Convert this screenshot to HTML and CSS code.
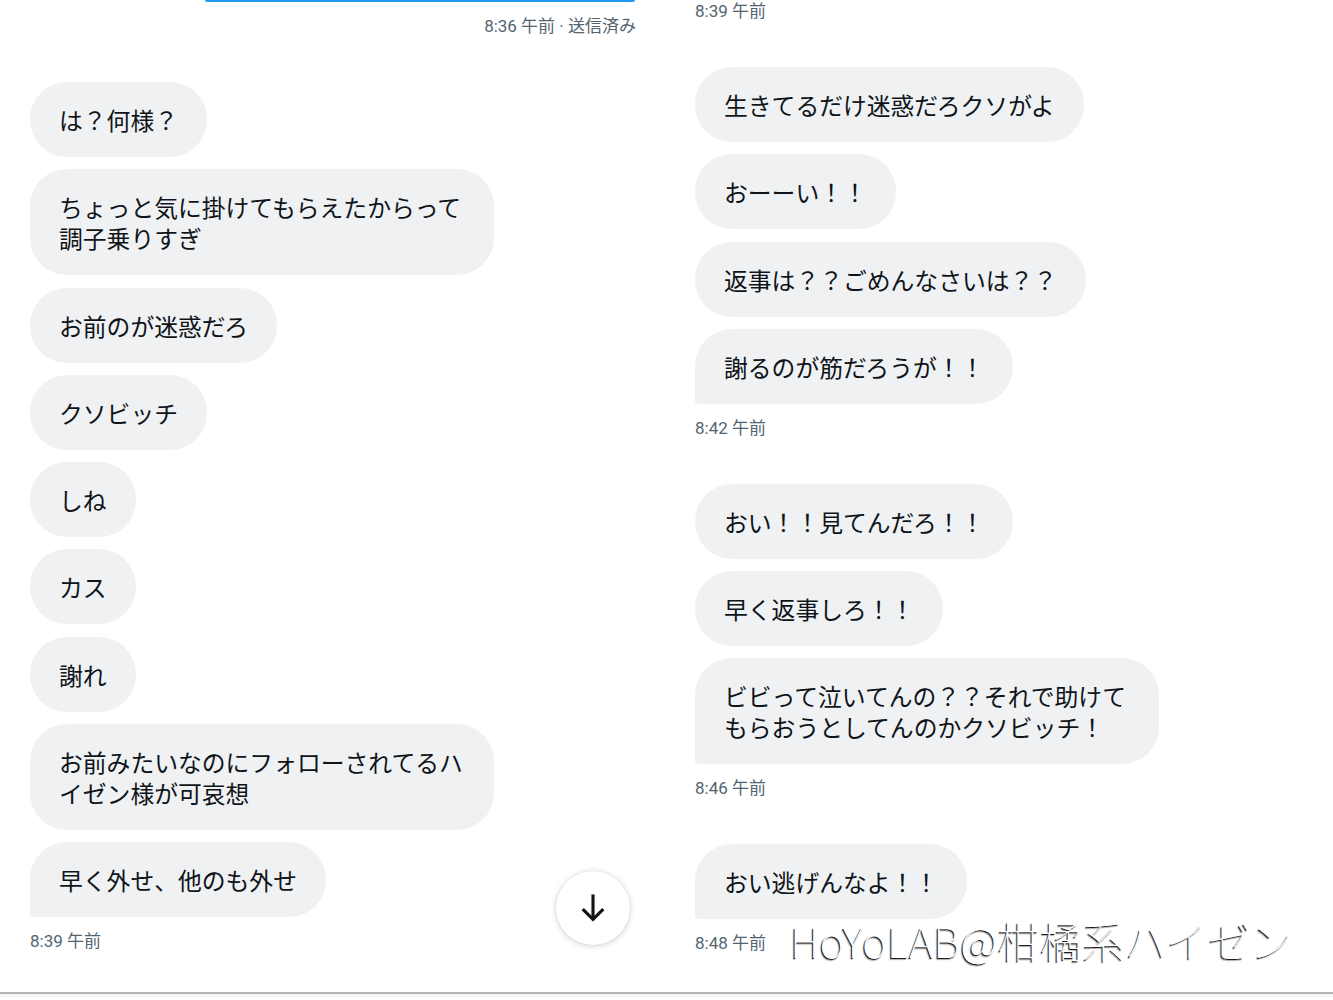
FILE: index.html
```html
<!DOCTYPE html>
<html lang="ja">
<head>
<meta charset="utf-8">
<link rel="stylesheet" href="styles.css">
</head>
<body>
<div class="page">
  <div class="screen">
    <section class="col col-left">
      <div class="sent-bar"></div>
      <div class="stamp stamp-sent">8:36 午前 · 送信済み</div>
      <div class="group">
        <div class="bubble">は？何様？</div>
        <div class="bubble">ちょっと気に掛けてもらえたからって調子乗りすぎ</div>
        <div class="bubble">お前のが迷惑だろ</div>
        <div class="bubble">クソビッチ</div>
        <div class="bubble">しね</div>
        <div class="bubble">カス</div>
        <div class="bubble">謝れ</div>
        <div class="bubble">お前みたいなのにフォローされてるハイゼン様が可哀想</div>
        <div class="bubble last">早く外せ、他のも外せ</div>
        <div class="stamp">8:39 午前</div>
      </div>
    </section>
    <section class="col col-right">
      <div class="stamp stamp-top">8:39 午前</div>
      <div class="group">
        <div class="bubble">生きてるだけ迷惑だろクソがよ</div>
        <div class="bubble">おーーい！！</div>
        <div class="bubble">返事は？？ごめんなさいは？？</div>
        <div class="bubble last">謝るのが筋だろうが！！</div>
        <div class="stamp">8:42 午前</div>
      </div>
      <div class="group">
        <div class="bubble">おい！！見てんだろ！！</div>
        <div class="bubble">早く返事しろ！！</div>
        <div class="bubble last">ビビって泣いてんの？？それで助けてもらおうとしてんのかクソビッチ！</div>
        <div class="stamp">8:46 午前</div>
      </div>
      <div class="group">
        <div class="bubble last">おい逃げんなよ！！</div>
        <div class="stamp">8:48 午前</div>
      </div>
    </section>
    <button class="scroll-down" aria-label="下へ">
      <svg width="34" height="34" viewBox="0 0 24 24" fill="none" stroke="#0f1419" stroke-width="2.2" stroke-linecap="square">
        <path d="M12 3.5v16"/>
        <path d="M5.5 13.5l6.5 6.5 6.5-6.5"/>
      </svg>
    </button>
    <div class="watermark">HoYoLAB@柑橘系ハイゼン</div>
  </div>
  <div class="bottom-strip"></div>
</div>
</body>
</html>
```

FILE: styles.css
```css
* { box-sizing: border-box; }

html, body {
  margin: 0;
  padding: 0;
  background: #ffffff;
}

body {
  font-family: "Noto Sans CJK JP", "Noto Sans", sans-serif;
  color: #0f1419;
}

.page {
  width: 1333px;
  height: 1000px;
  overflow: hidden;
}

.screen {
  position: relative;
  height: 994px;
  display: flex;
  border-bottom: 2px solid #b3b6b6;
  overflow: hidden;
}

.bottom-strip {
  height: 4px;
  background: #f4f6f6;
}

.col {
  width: 665px;
  display: flex;
  flex-direction: column;
  align-items: flex-start;
}

.col-left { padding: 0 30px; }
.col-right { padding: 0 30px; width: 668px; }

.sent-bar {
  align-self: flex-end;
  width: 430px;
  height: 2px;
  background: #1d9bf0;
  border-radius: 0 0 2px 2px;
}

.stamp {
  font-family: Roboto, "Noto Sans CJK JP", sans-serif;
  font-size: 17px;
  line-height: 20px;
  color: #536471;
  margin-top: 14px;
  white-space: nowrap;
}

.stamp-sent {
  align-self: flex-end;
  margin-top: 14px;
  margin-right: -1px;
}

.stamp-top { margin-top: 1px; }

.group {
  display: flex;
  flex-direction: column;
  align-items: flex-start;
  margin-top: 46px;
}

.col-left .group { margin-top: 46px; }

.bubble {
  max-width: 464px;
  background: #eff1f3;
  border-radius: 37px;
  padding: 22px 29px;
  font-size: 23.8px;
  line-height: 31px;
  color: #0f1419;
  margin-bottom: 12.25px;
}

.bubble.last {
  border-bottom-left-radius: 3px;
  margin-bottom: 0;
}

.scroll-down {
  position: absolute;
  left: 556px;
  top: 871px;
  width: 74px;
  height: 74px;
  border-radius: 50%;
  border: none;
  background: #ffffff;
  box-shadow: 0 1px 6px rgba(0, 0, 0, 0.18), 0 0 2px rgba(0, 0, 0, 0.08);
  display: flex;
  align-items: center;
  justify-content: center;
  padding: 0;
}

.watermark {
  position: absolute;
  left: 790px;
  top: 912px;
  font-family: "Noto Sans CJK JP", sans-serif;
  font-weight: 100;
  font-size: 42px;
  line-height: 56px;
  letter-spacing: 0.3px;
  color: #ffffff;
  text-shadow: -1px 1px 0 #1e1e1e, -1.5px 1.5px 1px rgba(0, 0, 0, 0.35);
  white-space: nowrap;
}
```
